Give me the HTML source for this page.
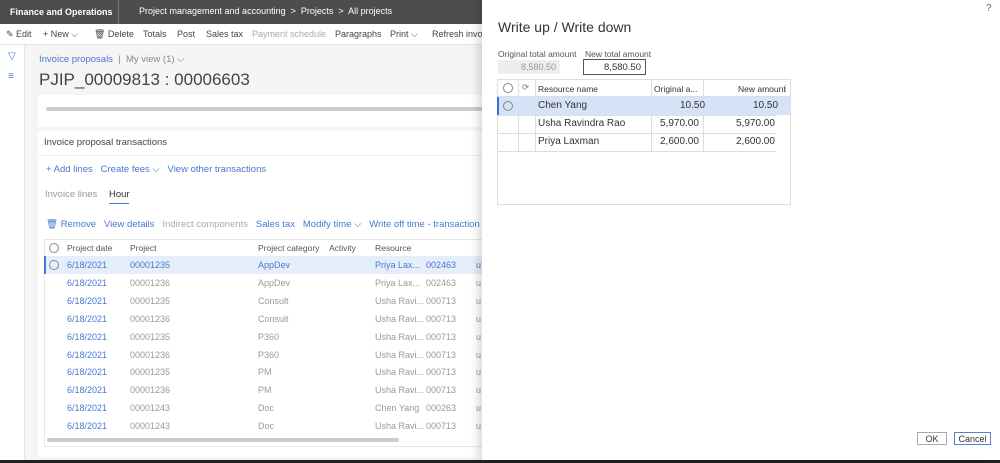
<!DOCTYPE html>
<html><head><style>
*{box-sizing:border-box;margin:0;padding:0}
body{width:1000px;height:463px;overflow:hidden;position:relative;background:#f5f5f5;font-family:"Liberation Sans",sans-serif;font-size:9px;color:#333}
.a{position:absolute;white-space:nowrap}
.top{left:0;top:0;width:1000px;height:24px;background:#4d4d4d;color:#fff}
.tb{left:0;top:24px;width:1000px;height:21px;background:#fff;border-bottom:1px solid #e4e4e4}
.tb span{position:absolute;top:5px;font-size:9px;color:#444}
.lnav{left:0;top:45px;width:25px;height:418px;background:#fff;border-right:1px solid #e6e6e6}
.blue{color:#4a78d0}
.card{background:#fff}
.rad{position:absolute;width:10px;height:10px;border:1px solid #888;border-radius:50%}
</style></head><body>
<div class="a top">
 <div class="a" style="left:10px;top:7px;font-size:9px;font-weight:bold">Finance and Operations</div>
 <div class="a" style="left:118px;top:0;width:1px;height:24px;background:#777"></div>
 <div class="a" style="left:139px;top:6px;font-size:9px">Project management and accounting &nbsp;&gt;&nbsp; Projects &nbsp;&gt;&nbsp; All projects</div>
</div>
<div class="a tb">
 <span style="left:6px">✎ Edit</span><span style="left:43px">+ New ⌵</span><span style="left:94px">🗑 Delete</span>
 <span style="left:143px">Totals</span><span style="left:177px">Post</span><span style="left:206px">Sales tax</span>
 <span style="left:252px;color:#aaa">Payment schedule</span><span style="left:335px">Paragraphs</span><span style="left:390px">Print ⌵</span><span style="left:432px">Refresh invoi</span>
</div>
<div class="a lnav"><div class="a" style="left:8px;top:6px;color:#4a78d0;font-size:10px">▽</div><div class="a" style="left:8px;top:26px;color:#4a78d0;font-size:10px">≡</div></div>
<div class="a blue" style="left:39px;top:54px;font-size:9.5px">Invoice proposals <span style="color:#888">&nbsp;|&nbsp; My view (1) ⌵</span></div>
<div class="a" style="left:39px;top:70px;font-size:17px;color:#444">PJIP_00009813 : 00006603</div>
<div class="a card" style="left:38px;top:95px;width:450px;height:32px"><div class="a" style="left:8px;top:12px;width:440px;height:4px;border-radius:2px;background:#ccc"></div></div>
<div class="a card" style="left:38px;top:131px;width:450px;height:326px">
 <div class="a" style="left:6px;top:6px;font-size:9.5px;color:#444">Invoice proposal transactions</div>
 <div class="a" style="left:0;top:24px;width:450px;height:1px;background:#eee"></div>
 <div class="a blue" style="left:8px;top:33px;font-size:9.5px">+ Add lines &nbsp;&nbsp;Create fees ⌵ &nbsp;&nbsp;View other transactions</div>
 <div class="a" style="left:7px;top:58px;font-size:9.5px;color:#999">Invoice lines</div>
 <div class="a" style="left:71px;top:58px;font-size:9.5px;color:#333">Hour</div>
 <div class="a" style="left:71px;top:72px;width:20px;height:1px;background:#4a78d0"></div>
 <div class="a blue" style="left:8px;top:88px;font-size:9.5px">🗑 Remove &nbsp;&nbsp;View details &nbsp;&nbsp;<span style="color:#aaa">Indirect components</span> &nbsp;&nbsp;Sales tax &nbsp;&nbsp;Modify time ⌵ &nbsp;&nbsp;Write off time - transaction ⌵</div>
 <div class="a" style="left:6px;top:108px;width:444px;height:208px;border:1px solid #e8e8e8;background:#fff"></div>
</div>
<div id="grid"></div>
<div class="a" style="left:0;top:460px;width:1000px;height:3px;background:#222"></div>
<div class="a" style="left:482px;top:0;width:518px;height:460px;background:#fff;box-shadow:-4px 0 8px rgba(0,0,0,.15)">
 <div class="a" style="left:504px;top:3px;color:#666;font-size:10px">?</div>
 <div class="a" style="left:16px;top:19px;font-size:14px;color:#333">Write up / Write down</div>
 <div class="a" style="left:16px;top:49px;font-size:8.5px;color:#555">Original total amount</div>
 <div class="a" style="left:103px;top:49px;font-size:8.5px;color:#555">New total amount</div>
 <div class="a" style="left:16px;top:60px;width:62px;height:14px;background:#eee;color:#999;text-align:right;padding:2px 4px;font-size:9px">8,580.50</div>
 <div class="a" style="left:101px;top:59px;width:63px;height:16px;border:1px solid #555;text-align:right;padding:2px 4px;font-size:9.5px">8,580.50</div>
 <div class="a" style="left:15px;top:79px;width:294px;height:126px;border:1px solid #ddd"></div>
 <div class="a" style="left:15px;top:79px;width:294px;height:18px;border-bottom:1px solid #ddd;font-size:8.5px">
  <div class="rad" style="left:6px;top:4px"></div><div class="a" style="left:25px;top:3px;color:#777">⟳</div>
  <div class="a" style="left:21px;top:0;width:1px;height:72px;background:#ddd"></div>
  <div class="a" style="left:38px;top:0;width:1px;height:72px;background:#ddd"></div>
  <div class="a" style="left:154px;top:0;width:1px;height:72px;background:#ddd"></div>
  <div class="a" style="left:206px;top:0;width:1px;height:72px;background:#ddd"></div>
  <div class="a" style="left:41px;top:5px">Resource name</div><div class="a" style="left:157px;top:5px">Original a...</div><div class="a" style="left:241px;top:5px">New amount</div><div class="a" style="left:284px;top:4px;color:#888">⋮</div>
 </div>
 <div class="a" style="left:15px;top:97px;width:294px;height:18px;background:#d6e2f7;box-shadow:inset 2px 0 0 #3b6fd6"></div>
 <div class="rad" style="left:21px;top:101px"></div>
 <div class="a" style="left:56px;top:100px;font-size:10px">Chen Yang</div><div class="a" style="left:198px;top:100px;font-size:10px">10.50</div><div class="a" style="left:271px;top:100px;font-size:10px">10.50</div>
 <div class="a" style="left:15px;top:115px;width:279px;height:1px;background:#ddd"></div>
 <div class="a" style="left:56px;top:118px;font-size:10px">Usha Ravindra Rao</div><div class="a" style="left:178px;top:118px;font-size:10px">5,970.00</div><div class="a" style="left:254px;top:118px;font-size:10px">5,970.00</div>
 <div class="a" style="left:15px;top:133px;width:279px;height:1px;background:#ddd"></div>
 <div class="a" style="left:56px;top:136px;font-size:10px">Priya Laxman</div><div class="a" style="left:178px;top:136px;font-size:10px">2,600.00</div><div class="a" style="left:254px;top:136px;font-size:10px">2,600.00</div>
 <div class="a" style="left:15px;top:151px;width:279px;height:1px;background:#ddd"></div>
 <div class="a" style="left:435px;top:432px;width:30px;height:13px;border:1px solid #aaa;text-align:center;font-size:9px;padding-top:1px">OK</div>
 <div class="a" style="left:472px;top:432px;width:37px;height:13px;border:1px solid #5a7fd0;text-align:center;font-size:9px;padding-top:1px">Cancel</div>
</div>
<script>
var rows=[["00001235","AppDev","Priya Lax...","002463"],["00001236","AppDev","Priya Lax...","002463"],["00001235","Consult","Usha Ravi...","000713"],["00001236","Consult","Usha Ravi...","000713"],["00001235","P360","Usha Ravi...","000713"],["00001236","P360","Usha Ravi...","000713"],["00001235","PM","Usha Ravi...","000713"],["00001236","PM","Usha Ravi...","000713"],["00001243","Doc","Chen Yang","000263"],["00001243","Doc","Usha Ravi...","000713"]];
var h='<div class="a" style="left:44px;top:240px;font-size:8.5px;color:#555;width:440px"><div class="rad" style="left:5px;top:3px"></div><span class="a" style="left:23px;top:3px">Project date</span><span class="a" style="left:86px;top:3px">Project</span><span class="a" style="left:214px;top:3px">Project category</span><span class="a" style="left:285px;top:3px">Activity</span><span class="a" style="left:331px;top:3px">Resource</span></div>';
rows.forEach(function(r,i){var y=256+i*17.9;var sel=i==0;var c=sel?'#4a78d0':'#999';
h+='<div class="a" style="left:44px;top:'+y+'px;width:438px;height:18px;font-size:9px;'+(sel?'background:#e6eefb;box-shadow:inset 2px 0 0 #4a78d0;':'')+'">'+(sel?'<div class="rad" style="left:5px;top:4px"></div>':'')+'<span class="a blue" style="left:23px;top:4px">6/18/2021</span><span class="a" style="left:86px;top:4px;color:'+c+'">'+r[0]+'</span><span class="a" style="left:214px;top:4px;color:'+c+'">'+r[1]+'</span><span class="a" style="left:331px;top:4px;color:'+c+'">'+r[2]+'</span><span class="a" style="left:382px;top:4px;color:'+c+'">'+r[3]+'</span><span class="a" style="left:432px;top:4px;color:'+c+'">u</span></div>';});
h+='<div class="a" style="left:47px;top:438px;width:352px;height:4px;border-radius:2px;background:#ccc"></div>';
document.getElementById('grid').innerHTML=h;
</script>
</body></html>
